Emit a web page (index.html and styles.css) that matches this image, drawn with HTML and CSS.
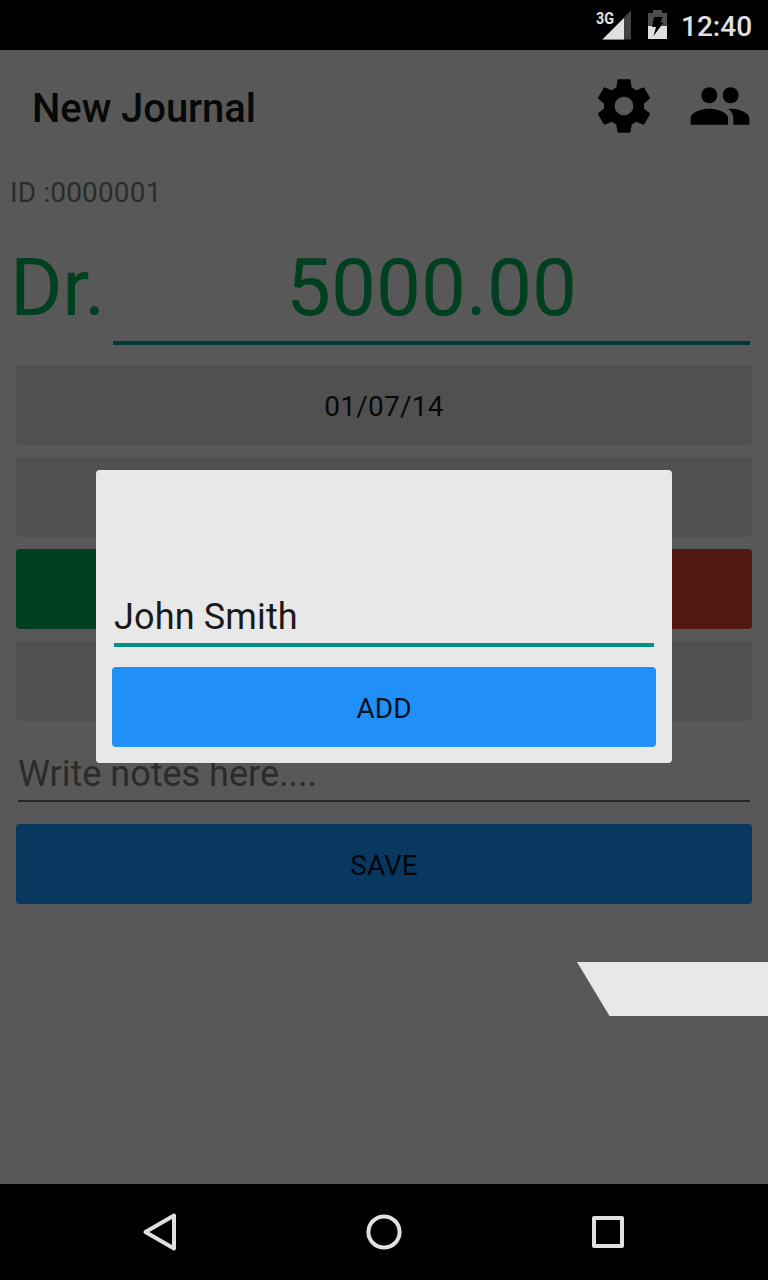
FILE: index.html
```html
<!DOCTYPE html>
<html lang="en">
<head>
<meta charset="utf-8">
<title>New Journal</title>
<link rel="stylesheet" href="styles.css">
</head>
<body>
<div class="screen">
  <header class="status-bar">
    <svg class="signal" width="36" height="32" viewBox="0 0 36 32">
      <path d="M6 30.500L35 1.500V30.500Z" fill="#424242"/>
      <path d="M6.500 30.500L28 9V30.500Z" fill="#e0e0e0"/>
      <text class="network" x="0" y="14.500" textLength="18" lengthAdjust="spacingAndGlyphs">3G</text>
    </svg>
    <svg class="battery" width="19" height="30" viewBox="0 0 19 30">
      <path d="M0 4H5V1H14V4H19V17H0Z" fill="#4d4d4d"/>
      <path d="M0 17H19V30H0Z" fill="#e0e0e0"/>
      <path d="M6 8H14.500L12.500 13.500H15.500L5.500 27L8 18H4Z" fill="#000"/>
    </svg>
    <span class="clock">12:40</span>
  </header>

  <main class="page">
    <div class="app-bar">
      <h1 class="title">New Journal</h1>
      <svg class="action" viewBox="0 0 24 24"><path d="M19.430 12.980c.04-.32.07-.64.07-.98s-.03-.66-.07-.98l2.110-1.650c.19-.15.24-.42.12-.64l-2-3.460c-.12-.22-.39-.3-.61-.22l-2.490 1c-.52-.4-1.080-.73-1.690-.98l-.38-2.650C14.460 2.180 14.250 2 14 2h-4c-.25 0-.46.18-.49.42l-.38 2.650c-.61.25-1.170.59-1.690.98l-2.490-1c-.23-.09-.49 0-.61.22l-2 3.460c-.13.22-.07.49.12.64l2.110 1.650c-.04.32-.07.65-.07.98s.03.66.07.98l-2.110 1.650c-.19.15-.24.42-.12.64l2 3.460c.12.22.39.3.61.22l2.490-1c.52.4 1.080.73 1.690.98l.38 2.650c.03.24.24.42.49.42h4c.25 0 .46-.18.49-.42l.38-2.650c.61-.25 1.170-.59 1.690-.98l2.490 1c.23.09.49 0 .61-.22l2-3.460c.12-.22.07-.49-.12-.64l-2.110-1.650zM12 15.500c-1.930 0-3.500-1.570-3.500-3.500s1.570-3.500 3.500-3.500 3.500 1.570 3.500 3.500-1.570 3.500-3.500 3.500z"/></svg>
      <svg class="action" viewBox="0 0 24 24"><path d="M16 11c1.660 0 2.990-1.340 2.990-3S17.660 5 16 5c-1.660 0-3 1.340-3 3s1.340 3 3 3zm-8 0c1.660 0 2.990-1.340 2.990-3S9.660 5 8 5C6.340 5 5 6.340 5 8s1.340 3 3 3zm0 2c-2.330 0-7 1.170-7 3.500V19h14v-2.500c0-2.330-4.670-3.500-7-3.500zm8 0c-.29 0-.62.02-.97.05 1.160.84 1.970 1.970 1.970 3.450V19h6v-2.500c0-2.330-4.670-3.500-7-3.500z"/></svg>
    </div>
    <p class="journal-id">ID :0000001</p>
    <div class="amount-row">
      <span class="side">Dr.</span>
      <span class="amount">5000.00</span>
    </div>
    <div class="form">
      <div class="button date">01/07/14</div>
      <div class="button"></div>
      <div class="split">
        <div class="button debit"></div>
        <div class="button credit"></div>
      </div>
      <div class="button"></div>
      <div class="notes">Write notes here....</div>
      <div class="button save">SAVE</div>
    </div>
  </main>

  <nav class="nav-bar">
    <svg class="nav-icon" viewBox="0 0 48 48"><path d="M9.500 24L38 7.500V40.500Z"/></svg>
    <svg class="nav-icon" viewBox="0 0 48 48"><circle cx="24" cy="24" r="15.600"/></svg>
    <svg class="nav-icon" viewBox="0 0 48 48"><rect x="10" y="10" width="28" height="28"/></svg>
  </nav>

  <div class="ribbon"></div>
  <section class="dialog">
    <div class="name-field">John Smith</div>
    <div class="button add">ADD</div>
  </section>
</div>
</body>
</html>
```
FILE: styles.css
```css
* { box-sizing: border-box; }
body { margin: 0; background: #000; font-family: Roboto, sans-serif; }
.screen {
  position: relative;
  display: flex;
  flex-direction: column;
  width: 768px;
  height: 1280px;
  overflow: hidden;
}
.status-bar {
  display: flex;
  flex: none;
  align-items: flex-start;
  height: 50px;
  padding: 9px 16px 0 596px;
  background: #000;
}
.signal { flex: none; }
.network { font: 700 17px Roboto, sans-serif; fill: #e0e0e0; }
.battery { flex: none; margin-left: 16px; }
.clock {
  margin-left: 14px;
  color: #e0e0e0;
  font-size: 28px;
  font-weight: 500;
  line-height: 36px;
  white-space: nowrap;
}
.page { flex: 1; min-height: 0; background: #585858; }
.app-bar {
  display: flex;
  align-items: center;
  height: 112px;
  padding: 0 16px 0 32px;
}
.title {
  flex: 1;
  margin: 4px 0 0;
  color: #080808;
  font-size: 40px;
  font-weight: 500;
  letter-spacing: -.08px;
}
.action { width: 64px; height: 64px; fill: #000; }
.action + .action { margin-left: 32px; }
.journal-id {
  height: 60px;
  margin: 0;
  padding-left: 10px;
  color: #2b2b2b;
  font-size: 28px;
  line-height: 62px;
  letter-spacing: .15px;
}
.amount-row {
  display: flex;
  height: 143px;
  padding: 17px 18px 20px 10px;
  color: #004020;
  font-size: 80px;
  line-height: 98px;
}
.side { width: 103px; letter-spacing: -.3px; }
.amount { flex: 1; border-bottom: 4px solid #003a34; text-align: center; }
.form { display: flex; flex-direction: column; gap: 12px; padding: 0 16px; }
.button {
  height: 80px;
  border-radius: 4px;
  background: #505050;
  color: #080808;
  font-size: 28px;
  line-height: 84px;
  text-align: center;
}
.date { letter-spacing: .25px; }
.split { display: flex; gap: 8px; }
.split .button { flex: 1; }
.debit { background: #004020; }
.credit { background: #501810; }
.notes {
  height: 69px;
  margin: 0 2px 10px;
  border-bottom: 2px solid #272727;
  color: #2b2b2b;
  font-size: 36px;
  line-height: 83px;
}
.save { background: #083860; color: #00050c; }
.nav-bar {
  display: flex;
  flex: none;
  align-items: center;
  justify-content: center;
  gap: 176px;
  height: 96px;
  background: #000;
}
.nav-icon {
  width: 48px;
  height: 48px;
  fill: none;
  stroke: #e0e0e0;
  stroke-width: 4;
  stroke-linejoin: round;
}
.ribbon {
  position: absolute;
  top: 962px;
  right: 0;
  width: 191px;
  height: 54px;
  background: #e8e8e8;
  clip-path: polygon(0 0, 100% 0, 100% 100%, 32.5px 100%);
}
.dialog {
  position: absolute;
  top: 470px;
  left: 96px;
  width: 576px;
  height: 293px;
  padding: 119px 16px 16px;
  border-radius: 4px;
  background: #e8e8e8;
}
.name-field {
  height: 58px;
  margin: 0 2px 20px;
  border-bottom: 4px solid #009086;
  color: #1a1a1a;
  font-size: 36px;
  line-height: 56px;
  letter-spacing: .15px;
}
.add { background: #2090f8; color: #03101d; }
```
